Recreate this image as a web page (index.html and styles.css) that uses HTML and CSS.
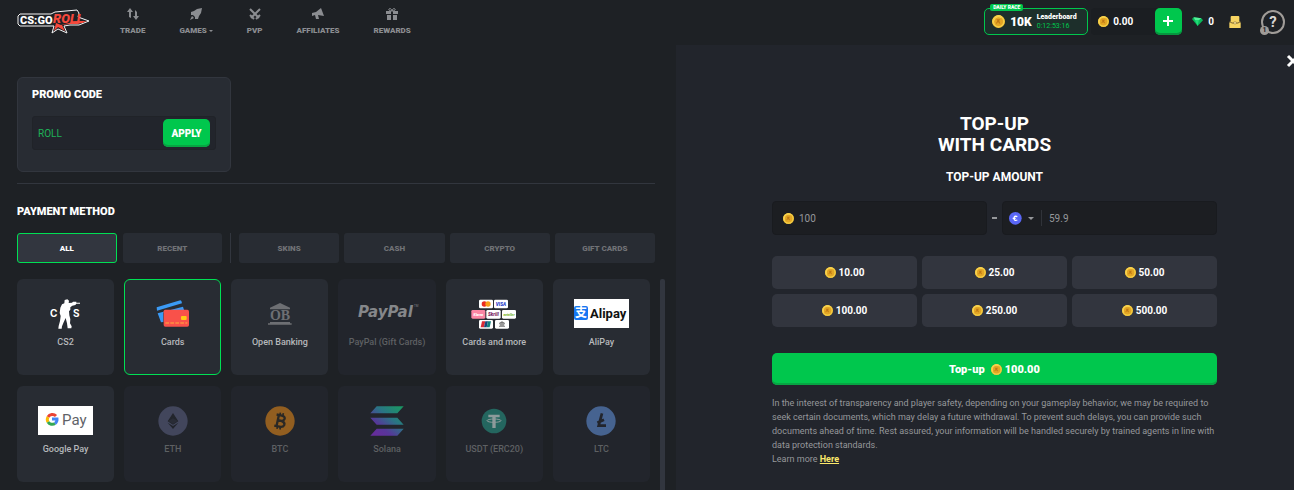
FILE: index.html
```html
<!DOCTYPE html>
<html lang="en">
<head>
<meta charset="utf-8">
<meta name="viewport" content="width=device-width, initial-scale=1">
<title>CSGORoll - Top-up</title>
<link rel="stylesheet" href="styles.css">
</head>
<body>
<svg class="defs" aria-hidden="true">
  <symbol id="coin" viewBox="0 0 36 36">
    <circle cx="18" cy="18" r="18" fill="#e2b12e"/>
    <path d="M3 25A17 17 0 0 1 28 4L24 9A12 12 0 0 0 8 24Z" fill="#ffe066"/>
    <circle cx="18" cy="18" r="15" fill="none" stroke="#f6cf45" stroke-width="4"/>
    <circle cx="18" cy="18" r="12" fill="#e3a625"/>
    <path d="M12 12h11l-3 4 3 8-4-1-2-4-4 5-2-1 4-7z" fill="#bd7714"/>
  </symbol>
</svg>

<header class="topbar">
  <a class="logo" href="#" aria-label="CSGORoll home">
    <svg width="73" height="26" viewBox="0 0 73 26">
      <path d="M3 5H34L38 3 60 1 62 4 61 8 72 12 62 16H53L47 17 50 24 41 20 35 24 37 17H3L1 15V7Z" fill="#1e2125" stroke="#f4f4f4" stroke-width="1"/>
      <path d="M44 16L60 12 70 12 61 15H52L45 16 48 22 41 18 37 22 39 14Z" fill="#f5493c"/>
      <text x="3" y="15" class="logo-cs">CS:GO</text>
      <text x="36" y="14" class="logo-roll">ROLL</text>
    </svg>
  </a>
  <nav class="nav">
    <a href="#"><svg width="14" height="14" viewBox="0 0 14 14"><path d="M4 1L7 5H5V11L3 10V5H1ZM10 13L7 9H9V3L11 5V9H13Z"/></svg>TRADE</a>
    <a href="#"><svg width="14" height="14" viewBox="0 0 14 14"><path d="M13 1L8 2 5 4 2 5 2 8 4 8 6 10 6 12 9 12 10 9 12 6ZM3 9L1 13 5 11Z"/></svg><span class="with-caret">GAMES<i class="caret"></i></span></a>
    <a href="#"><svg width="14" height="14" viewBox="0 0 14 14"><path d="M2 2L11 11M12 2L3 11M2 8L6 12M12 8L8 12" stroke="#8b8d91" stroke-width="2"/></svg>PVP</a>
    <a href="#"><svg width="14" height="14" viewBox="0 0 14 14"><path d="M10 1L13 9 7 8 8 12H5L4 8 1 9V6L5 5Z"/></svg>AFFILIATES</a>
    <a href="#"><svg width="14" height="14" viewBox="0 0 14 14"><path d="M1 4H6V7H1ZM8 4H13V7H8ZM2 8H6V13H2ZM8 8H12V13H8Z"/><path d="M7 4C5 4 3 3 4 2S7 2 7 4C7 2 9 1 10 2S9 4 7 4" fill="none" stroke="#8b8d91"/></svg>REWARDS</a>
  </nav>
  <div class="account">
    <a class="race" href="#">
      <span class="race-tag">DAILY RACE</span>
      <svg class="coin-lg"><use href="#coin"/></svg>
      <strong class="race-prize">10K</strong>
      <span class="race-info"><b>Leaderboard</b><span class="race-time">0:12:53:16</span></span>
    </a>
    <div class="balance">
      <svg class="coin"><use href="#coin"/></svg><span>0.00</span>
      <button class="add" type="button" aria-label="Top up"><svg width="11" height="11" viewBox="0 0 11 11"><path d="M5 0V10M0 5H10" stroke="#fff" stroke-width="2"/></svg></button>
    </div>
    <div class="gems"><svg width="11" height="9" viewBox="0 0 33 27"><path d="M5 1L28 4 33 10 17 27 0 6Z" fill="#0ab95a"/><path d="M5 1L28 4 20 10 9 9Z" fill="#53f29a"/><path d="M9 9L20 10 17 27Z" fill="#20dc78"/></svg><span>0</span></div>
    <a class="bag" href="#" aria-label="Inventory"><svg width="12" height="12" viewBox="0 0 36 36"><path d="M5 3Q5 0 8 0H28Q31 0 31 3V16L35 20V36H1V20L5 16Z" fill="#f8d562"/><path d="M2 17L9 21H27L34 17" fill="none" stroke="#7a6430" stroke-width="3"/><path d="M15 17H21V24H15Z" fill="#ffe898" stroke="#7a6430"/></svg></a>
    <a class="help" href="#" aria-label="Help">?<span class="help-badge">1</span></a>
  </div>
</header>

<main class="layout">
  <section class="left">
    <form class="promo">
      <label class="section-title" for="promo">PROMO CODE</label>
      <div class="promo-row">
        <input id="promo" type="text" value="ROLL">
        <button class="green" type="button">APPLY</button>
      </div>
    </form>
    <h2 class="section-title methods-title">PAYMENT METHOD</h2>
    <div class="tabs">
      <div class="tab-group">
        <button class="tab active" type="button">ALL</button>
        <button class="tab" type="button">RECENT</button>
      </div>
      <div class="tab-group tab-group-types">
        <button class="tab" type="button">SKINS</button>
        <button class="tab" type="button">CASH</button>
        <button class="tab" type="button">CRYPTO</button>
        <button class="tab" type="button">GIFT CARDS</button>
      </div>
    </div>
    <div class="methods">
      <div class="method-grid">
        <button class="method" type="button">
          <svg width="32" height="30" viewBox="0 0 96 90" fill="#fff"><path d="M44 3L52 1 57 5 56 12 66 11 69 8H79V11H90V14H79L76 18 67 20 61 25V32L57 37 58 49 61 61 60 73 65 82 64 88H53L51 73 47 57 41 70 36 82 35 89H25L26 81 30 66 32 51 29 42 31 26 36 16 43 13Z"/><text x="0" y="55" class="cs-letter">C</text><text x="69" y="55" class="cs-letter">S</text></svg>
          <span>CS2</span>
        </button>
        <button class="method selected" type="button">
          <svg width="34" height="30" viewBox="0 0 102 90"><path d="M2 25L73 4Q77 4 78 13L3 35ZM5 43L81 23 84 33H30Q23 34 22 43V69L15 70Z" fill="#3b9af5"/><rect x="23" y="32" width="76" height="51" rx="5" fill="#f9514a"/><rect x="75" y="51" width="17" height="12" rx="3" fill="#ffc915"/><path d="M28 72H94" stroke="#ffb03b" stroke-width="3" stroke-dasharray="11 4"/></svg>
          <span>Cards</span>
        </button>
        <button class="method" type="button">
          <svg width="30" height="30" viewBox="0 0 90 90"><path d="M15 26L45 12 75 26V31H15ZM15 69H75V73H80V77H9V73H15Z" fill="#6d6f73"/><text x="45" y="64" class="ob">OB</text></svg>
          <span>Open Banking</span>
        </button>
        <button class="method off" type="button" disabled>
          <svg width="64" height="30" viewBox="0 0 64 30"><text x="3" y="18" class="paypal">PayPal</text><text x="59" y="8" class="paypal-tm">TM</text></svg>
          <span>PayPal (Gift Cards)</span>
        </button>
        <button class="method" type="button">
          <svg width="46" height="30" viewBox="0 0 138 90">
            <g fill="#fff"><rect x="24" y="2" width="42" height="26" rx="4"/><rect x="69" y="2" width="42" height="26" rx="4"/><rect x="46" y="33" width="43" height="26" rx="4"/><rect x="93" y="33" width="42" height="26" rx="4"/><rect x="24" y="63" width="42" height="26" rx="4"/><rect x="72" y="63" width="42" height="26" rx="4"/></g>
            <rect x="1" y="33" width="42" height="26" rx="4" fill="#fb86a4"/>
            <circle cx="40" cy="15" r="8" fill="#eb2b22"/><circle cx="51" cy="15" r="8" fill="#f99f1b"/>
            <g class="brand"><text x="90" y="20" fill="#2940c9">VISA</text><text x="67" y="51" fill="#771b61">Skrill</text><text x="22" y="50" fill="#fff" class="brand-sm">Klarna</text><text x="114" y="50" fill="#78b52d" class="brand-sm">neteller</text></g>
            <path d="M33 67H43L39 85H29Z" fill="#d92b35"/><path d="M43 67H51L47 85H39Z" fill="#17467b"/><path d="M51 67H60L56 85H47Z" fill="#12827e"/>
            <path d="M84 72L93 67 102 72V74H84ZM86 76H100V80H86ZM84 82H102V84H84Z" fill="#777"/>
          </svg>
          <span>Cards and more</span>
        </button>
        <button class="method" type="button">
          <svg width="55" height="30" viewBox="0 0 55 30"><rect width="55" height="29" fill="#fff"/><rect y="7" width="14" height="14" rx="2" fill="#1777f2"/><text x="7" y="18" class="zhi">支</text><text x="16" y="19" class="alipay">Alipay</text></svg>
          <span>AliPay</span>
        </button>
        <button class="method" type="button">
          <svg width="55" height="30" viewBox="0 0 55 30"><rect width="55" height="29" fill="#fff"/><g fill="none" stroke-width="3"><path d="M18 10A5 5 0 0 0 10 11" stroke="#ea4335"/><path d="M10 11A5 5 0 0 0 10 16" stroke="#fbbc04"/><path d="M10 16A5 5 0 0 0 17 17.500" stroke="#34a853"/><path d="M17 17.500A5 5 0 0 0 19 13H14" stroke="#4285f4"/></g><text x="24" y="19" class="gpay">Pay</text></svg>
          <span>Google Pay</span>
        </button>
        <button class="method off" type="button" disabled>
          <svg width="30" height="30" viewBox="0 0 90 90"><circle cx="45" cy="45" r="44" fill="#42465c"/><path d="M45 21L61 46 45 56 29 46ZM29 50L45 60 61 50 45 69Z" fill="#22252c"/><path d="M45 37L60 45 45 54 30 45Z" fill="#292c36"/></svg>
          <span>ETH</span>
        </button>
        <button class="method off" type="button" disabled>
          <svg width="30" height="30" viewBox="0 0 90 90"><circle cx="45" cy="45" r="44" fill="#925e20"/><g transform="rotate(12 45 45)" fill="none" stroke="#2a2825" stroke-width="7"><path d="M31 28H47Q59 29 57 37 56 44 46 44H38 49Q61 46 60 54 58 62 47 62H31M38 28V62"/><path d="M41 20V29M50 20V29M41 62V70M50 62V70" stroke-width="5"/></g></svg>
          <span>BTC</span>
        </button>
        <button class="method off" type="button" disabled>
          <svg width="34" height="30" viewBox="0 0 102 90"><defs><linearGradient id="sol" gradientUnits="userSpaceOnUse" x1="90" y1="2" x2="20" y2="88"><stop offset="0" stop-color="#1b9664"/><stop offset=".4" stop-color="#2a7485"/><stop offset=".75" stop-color="#57369a"/><stop offset="1" stop-color="#652d9b"/></linearGradient></defs><path d="M20 1H101L82 22H1ZM1 35H82L101 56H20ZM20 68H101L82 89H1Z" fill="url(#sol)"/></svg>
          <span>Solana</span>
        </button>
        <button class="method off" type="button" disabled>
          <svg width="30" height="30" viewBox="0 0 90 90"><circle cx="45" cy="45" r="37" fill="#24665f"/><path d="M28 26H62V34H50V66H40V34H28Z" fill="#8d9b9b"/><ellipse cx="45" cy="44" rx="21" ry="5" fill="none" stroke="#8d9b9b" stroke-width="3"/></svg>
          <span>USDT (ERC20)</span>
        </button>
        <button class="method off" type="button" disabled>
          <svg width="30" height="30" viewBox="0 0 90 90"><circle cx="45" cy="45" r="44" fill="#466390"/><path d="M48 22L38 59H60M34 50L54 41" fill="none" stroke="#22252c" stroke-width="8"/></svg>
          <span>LTC</span>
        </button>
      </div>
      <div class="scroll-thumb"></div>
    </div>
  </section>

  <section class="right">
    <button class="close" type="button" aria-label="Close"><svg width="14" height="14" viewBox="0 0 14 14"><path d="M2 2L12 12M12 2L2 12" stroke="#fff" stroke-width="3"/></svg></button>
    <form class="topup">
      <h1>TOP-UP<br>WITH CARDS</h1>
      <h2>TOP-UP AMOUNT</h2>
      <div class="convert">
        <div class="field">
          <svg class="coin"><use href="#coin"/></svg>
          <input type="text" value="100" aria-label="Coins">
        </div>
        <span class="dash"></span>
        <div class="field currency">
          <svg width="13" height="13" viewBox="0 0 39 39"><circle cx="19" cy="19" r="19" fill="#5a67f6"/><path d="M25 14Q15 10 15 19T25 24M11 19H20" fill="none" stroke="#fff" stroke-width="4"/></svg>
          <span class="picker"><select aria-label="Currency"><option>EUR</option></select><i class="caret"></i></span>
          <input type="text" value="59.9" aria-label="Amount in currency">
        </div>
      </div>
      <div class="amounts">
        <button type="button"><svg class="coin"><use href="#coin"/></svg>10.00</button>
        <button type="button"><svg class="coin"><use href="#coin"/></svg>25.00</button>
        <button type="button"><svg class="coin"><use href="#coin"/></svg>50.00</button>
        <button type="button"><svg class="coin"><use href="#coin"/></svg>100.00</button>
        <button type="button"><svg class="coin"><use href="#coin"/></svg>250.00</button>
        <button type="button"><svg class="coin"><use href="#coin"/></svg>500.00</button>
      </div>
      <button class="green submit" type="button"><span>Top-up</span><span class="submit-sum"><svg class="coin"><use href="#coin"/></svg>100.00</span></button>
      <p class="legal">In the interest of transparency and player safety, depending on your gameplay behavior, we may be required to seek certain documents, which may delay a future withdrawal. To prevent such delays, you can provide such documents ahead of time. Rest assured, your information will be handled securely by trained agents in line with data protection standards.<br>Learn more <a href="#">Here</a></p>
    </form>
  </section>
</main>
</body>
</html>
```

FILE: styles.css
```css
* { box-sizing: border-box; }

body {
  margin: 0;
  min-height: 100vh;
  display: flex;
  flex-direction: column;
  background: #1e2125;
  color: #fff;
  font-family: Roboto, "Liberation Sans", sans-serif;
  font-size: 10px;
}

button, input, select { font: inherit; color: inherit; margin: 0; padding: 0; border: 0; background: none; }
button { cursor: pointer; }
input { min-width: 0; outline: 0; }
a { color: inherit; text-decoration: none; }
h1, h2, p { margin: 0; }
svg { display: block; flex: none; }

.defs { position: absolute; width: 0; height: 0; }
.coin { width: 11px; height: 11px; }
.coin-lg { width: 13px; height: 13px; }
.caret { border: 3px solid transparent; border-top-color: currentColor; border-bottom: 0; }

/* Top bar */
.topbar { height: 45px; display: flex; align-items: center; padding: 0 9px 2px 17px; }
.logo { margin-right: 30px; }
.logo-cs { font: 900 11px "Roboto", sans-serif; fill: #fff; }
.logo-roll { font: italic 900 13px Roboto, sans-serif; fill: #f5493c; }
.nav { display: flex; gap: 34px; color: #8b8d91; font-size: 8px; font-weight: 900; line-height: 10px; }
.nav a { display: flex; flex-direction: column; align-items: center; gap: 5px; }
.nav svg { fill: currentColor; }
.with-caret { display: flex; align-items: center; gap: 2px; }
.with-caret .caret { border-width: 2px 2px 0; }
.account { margin-left: auto; display: flex; align-items: center; font-weight: 700; }
.race {
  position: relative;
  width: 104px;
  height: 27px;
  display: flex;
  align-items: center;
  gap: 5px;
  padding-left: 7px;
  border: 1px solid #00c74d;
  border-radius: 5px;
  background: #1d2f2b;
}
.race-tag {
  position: absolute;
  top: -5px;
  left: 5px;
  padding: 0 3px;
  border-radius: 2px;
  background: #00c74d;
  font-size: 5px;
  font-weight: 900;
  line-height: 7px;
}
.race-prize { font-size: 12px; }
.race-info { display: flex; flex-direction: column; font-size: 7px; line-height: 9px; }
.race-time { color: #00c74d; font-weight: 400; }
.balance {
  margin-left: 3px;
  height: 27px;
  padding-left: 7px;
  display: flex;
  align-items: center;
  gap: 4px;
  border-radius: 4px;
  background: #1b1e22;
}
.add {
  width: 27px;
  height: 27px;
  margin-left: 18px;
  display: grid;
  place-items: center;
  border-radius: 5px;
  background: #00c74d;
  box-shadow: inset 0 -2px #07953f;
}
.gems { margin-left: 10px; display: flex; align-items: center; gap: 5px; }
.bag { margin-left: 15px; }
.help {
  position: relative;
  width: 24px;
  height: 24px;
  margin-left: 20px;
  border: 2px solid #a09c98;
  border-radius: 50%;
  font-size: 15px;
  line-height: 20px;
  text-align: center;
  color: #d8d5d2;
}
.help-badge {
  position: absolute;
  left: -3px;
  bottom: -3px;
  width: 9px;
  height: 9px;
  border-radius: 50%;
  background: #a09c98;
  color: #1e2125;
  font-size: 7px;
  line-height: 9px;
}

/* Page columns */
.layout { flex: 1; display: grid; grid-template-columns: 676fr 618fr; }
.left { min-width: 0; padding: 32px 11px 0 17px; display: flex; flex-direction: column; }
.right { position: relative; min-width: 0; padding: 68px 0 20px 19px; overflow: hidden; background: #22252c; }

.section-title { font-size: 11px; font-weight: 900; line-height: 14px; }
.green { border-radius: 5px; background: #00c74d; box-shadow: inset 0 -2px #08a443; font-weight: 900; }

/* Promo code */
.promo {
  width: 214px;
  padding: 10px 14px 21px;
  display: flex;
  flex-direction: column;
  gap: 14px;
  border: 1px solid #32363e;
  border-radius: 6px;
  background: #282c33;
}
.promo-row {
  height: 34px;
  display: flex;
  align-items: center;
  padding: 0 5px;
  border: 1px solid #202328;
  border-radius: 3px;
  background: #22252c;
}
.promo-row input { flex: 1; color: #1fb158; }
.promo-row .green { width: 47px; height: 28px; }

/* Payment methods */
.methods-title { margin: 11px 10px 0 0; padding-top: 21px; border-top: 1px solid #32363e; }
.tabs { margin: 14px 10px 0 0; display: grid; grid-template-columns: 214fr 424fr; }
.tab-group { display: grid; grid-auto-flow: column; grid-auto-columns: 1fr; gap: 6px; padding-right: 8px; border-right: 1px solid #32363e; }
.tab-group-types { gap: 5px; padding: 0 0 0 8px; border: 0; }
.tab { height: 30px; border: 1px solid transparent; border-radius: 3px; background: #282c33; color: #707276; font-size: 8px; font-weight: 900; }
.tab.active { background: #32363f; border-color: #00e054; color: #fff; }
.methods { margin-top: 16px; flex: 1; display: flex; gap: 10px; }
.method-grid { flex: 1; padding-bottom: 8px; display: grid; grid-template-columns: repeat(6, 1fr); grid-auto-rows: 96px; gap: 11px 10px; }
.method {
  min-width: 0;
  padding-top: 19px;
  display: flex;
  flex-direction: column;
  align-items: center;
  gap: 7px;
  border: 1px solid transparent;
  border-radius: 6px;
  background: #282c33;
  color: #b6b8bb;
  font-size: 9px;
  font-weight: 500;
  line-height: 12px;
  white-space: nowrap;
}
.method.selected { border-color: #00e054; }
.method.off { background: #22252c; color: #5e6063; }
.scroll-thumb { width: 5px; border-radius: 2px 2px 0 0; background: #32363f; }

/* Brand lettering */
.cs-letter { font: 700 30px Inter, sans-serif; }
.ob { font: 700 42px "Liberation Serif", serif; fill: #6d6f73; text-anchor: middle; }
.paypal { font: italic 700 15px "DejaVu Sans", sans-serif; fill: #85878a; }
.paypal-tm { font: 3px "Open Sans", sans-serif; fill: #85878a; }
.brand text { font: italic 900 14px Roboto, sans-serif; text-anchor: middle; }
.brand .brand-sm { font-size: 10px; }
.zhi { font: 700 12px "Noto Sans CJK SC", sans-serif; fill: #fff; text-anchor: middle; }
.alipay { font: 700 13px Roboto, sans-serif; fill: #111; }
.gpay { font: 15px Roboto, sans-serif; fill: #5f6368; }

/* Top-up form */
.close { position: absolute; top: 9px; right: -6px; }
.topup { width: 72%; min-width: 445px; max-width: 600px; margin: 0 auto; display: flex; flex-direction: column; }
.topup h1 { font-size: 19px; font-weight: 700; line-height: 21px; text-align: center; }
.topup h2 { margin-top: 14px; font-size: 12px; font-weight: 700; line-height: 16px; text-align: center; }
.convert { margin-top: 16px; display: grid; grid-template-columns: 1fr 5px 1fr; gap: 5px; align-items: center; }
.dash { height: 2px; background: #96989b; }
.field {
  min-width: 0;
  height: 34px;
  padding: 0 10px;
  display: flex;
  align-items: center;
  gap: 5px;
  border: 1px solid #191b1f;
  border-radius: 4px;
  background: #1c1e22;
  color: #96989b;
}
.field input { flex: 1; }
.currency { padding-left: 6px; }
.picker { display: grid; align-items: center; justify-items: center; border-right: 1px solid #303339; padding-right: 7px; margin-right: 2px; }
.picker select, .picker .caret { grid-area: 1 / 1; }
.picker select { width: 7px; height: 16px; appearance: none; color: transparent; }
.picker .caret { pointer-events: none; }
.amounts { margin-top: 21px; display: grid; grid-template-columns: repeat(3, 1fr); gap: 5px; }
.amounts button {
  height: 33px;
  display: flex;
  align-items: center;
  justify-content: center;
  gap: 3px;
  border-radius: 5px;
  background: #32353e;
  font-weight: 700;
}
.submit { margin-top: 26px; height: 32px; display: flex; align-items: center; justify-content: center; gap: 6px; font-size: 11px; }
.submit-sum { display: flex; align-items: center; gap: 3px; }
.legal { margin-top: 11px; color: #96989b; font-size: 9px; line-height: 14px; }
.legal a { color: #fbe86a; font-weight: 700; text-decoration: underline; }
```
